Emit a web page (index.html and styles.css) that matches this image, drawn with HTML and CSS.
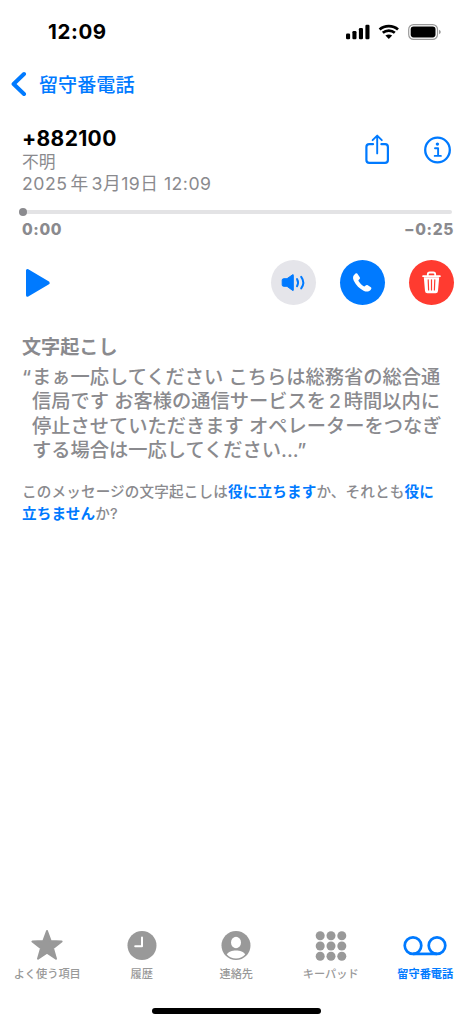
FILE: index.html
```html
<!DOCTYPE html>
<html lang="ja">
<head>
<meta charset="utf-8">
<title>留守番電話</title>
<link rel="stylesheet" href="styles.css">
</head>
<body>
<div class="screen">
  <header class="status">
    <span class="clock">12:09</span>
    <svg class="status-icons" width="98" height="20" viewBox="0 0 98 20">
      <rect x="0" y="12.5" width="4.1" height="5.8" rx="1.2"/><rect x="6.4" y="10" width="4.1" height="8.3" rx="1.2"/><rect x="12.9" y="7" width="4.1" height="11.3" rx="1.2"/><rect x="19.4" y="3.7" width="4.1" height="14.6" rx="1.2"/>
      <g fill="none" stroke="#000" stroke-width="2.7"><path d="M33.6 8.4C38.6 3.9 47 3.9 52 8.4"/><path d="M36.8 11.8C40.1 8.9 45.5 8.9 48.8 11.8"/></g>
      <path d="M39.4 14.5C41.5 13 44.1 13 46.2 14.5L42.8 18Z"/>
      <rect x="62.7" y="3.6" width="28.8" height="14.8" rx="4.8" fill="none" stroke="#999" stroke-width="1.2"/>
      <rect x="64.7" y="5.6" width="24.8" height="10.8" rx="2.8"/>
      <path d="M93 8.7Q94.8 9.5 94.8 11T93 13.3Z" fill="#999"/>
    </svg>
  </header>
  <nav class="nav">
    <svg width="16" height="26" viewBox="0 0 16 26"><path d="M13 3L2.6 13L13 23" fill="none" stroke="#007aff" stroke-width="4" stroke-linecap="round" stroke-linejoin="round"/></svg>
    <span class="nav-title">留守番電話</span>
  </nav>
  <section class="caller">
    <div class="caller-text">
      <div class="number">+882100</div>
      <div class="unknown">不明</div>
      <div class="date">2025<span class="year">年</span>3月19日 12:09</div>
    </div>
    <svg class="share" width="26" height="32" viewBox="0 0 26 32" fill="none" stroke="#007aff" stroke-width="2.2" stroke-linecap="round" stroke-linejoin="round"><path d="M9 10.2H5.2Q2.4 10.2 2.4 13V26Q2.4 28.9 5.3 28.9H21Q23.9 28.9 23.9 26V13Q23.9 10.2 21.1 10.2H17.4"/><path d="M13.2 19.4V1.6M8.6 6.2L13.2 1.6L17.8 6.2" stroke-width="1.9"/></svg>
    <svg class="info" width="28" height="28" viewBox="0 0 28 28" fill="none" stroke="#007aff"><circle cx="13.5" cy="14" r="12.3" stroke-width="2.3"/><circle cx="13.4" cy="8.1" r="1.7" fill="#007aff" stroke="none"/><path d="M11 12.3H14.1V19.9M10.7 19.9H16.9" stroke-width="1.9" stroke-linecap="round" stroke-linejoin="round"/></svg>
  </section>
  <section class="progress">
    <div class="track"><div class="knob"></div></div>
    <div class="times"><span>0:00</span><span>−0:25</span></div>
  </section>
  <section class="controls">
    <svg class="play" width="28" height="32" viewBox="0 0 28 32"><path d="M3.5 3.5V28.3L24.2 15.9Z" fill="#007aff" stroke="#007aff" stroke-width="3" stroke-linejoin="round"/></svg>
    <div class="round speaker"><svg width="45" height="45" viewBox="0 0 45 45"><path d="M12.5 18.7H16L21.6 14.8Q22.3 14.3 22.3 15.2V30Q22.3 30.9 21.6 30.4L16 26.3H12.5Q11.2 26.3 11.2 24.8V20.2Q11.2 18.7 12.5 18.7Z" fill="#007aff" stroke="#007aff"/><path d="M26 19.1Q28 22.6 26 26.2M30.2 16.8Q34.4 22.5 30.2 28.4" fill="none" stroke="#007aff" stroke-width="2" stroke-linecap="round"/></svg></div>
    <div class="round call"><svg width="45" height="45" viewBox="0 0 45 45"><path d="M15.3 13.8C16.3 13 17.2 13.3 17.9 14.4L19.6 16.9C20.3 18 20 18.7 19.1 19.5C18.2 20.3 18.3 20.7 18.9 21.6C20.1 23.4 21.4 24.8 23.2 26C24.1 26.7 24.6 26.7 25.3 25.8C26.1 24.9 26.8 24.7 27.8 25.3L30.5 27.1C31.5 27.8 31.7 28.5 30.9 29.5C29.3 31.6 26.9 32.2 24 30.9C19.7 29 15.8 25 13.7 20.5C12.5 17.8 12.8 15.7 15.3 13.8Z" fill="#fff"/></svg></div>
    <div class="round delete"><svg width="45" height="45" viewBox="0 0 45 45"><path d="M14.8 17.3H30.2L29 31Q28.8 33.3 26.6 33.3H18.4Q16.2 33.3 16 31Z" fill="#fff"/><path d="M14.1 16.2H30.9M18.8 16V14.4Q18.8 12.5 20.7 12.5H24.3Q26.2 12.5 26.2 14.4V16" fill="none" stroke="#fff" stroke-width="1.8" stroke-linecap="round"/><path d="M19.2 19.8L19.6 30M22.5 19.8V30M25.8 19.8L25.4 30" stroke="#ff3b30" stroke-width="1.2" stroke-linecap="round"/></svg></div>
  </section>
  <main class="transcript">
    <h1 class="heading">文字起こし</h1>
    <div class="quote">
      <div class="line first"><span class="open">“</span>まぁ一応してください こちらは総務省の総合通</div>
      <div class="line">信局です お客様の通信サービスを<span class="two">2</span>時間以内に</div>
      <div class="line">停止させていただきます オペレーターをつなぎ</div>
      <div class="line">する場合は一応してください<span class="end">...”</span></div>
    </div>
    <p class="feedback">このメッセージの文字起こしは<b>役に立ちます</b>か、それとも<b>役に<br>立ちません</b>か?</p>
  </main>
  <footer class="tabs">
    <div class="tab"><svg width="44" height="34" viewBox="0 0 44 34"><path d="M22 3L25.7 13.1L36.6 13.5L28 20.2L31 30.7L22 24.6L13 30.7L16 20.2L7.4 13.5L18.3 13.1Z" fill="#999" stroke="#999" stroke-width="2" stroke-linejoin="round"/></svg><span>よく使う項目</span></div>
    <div class="tab"><svg width="44" height="34" viewBox="0 0 44 34"><circle cx="22" cy="17.6" r="14.5" fill="#999"/><path d="M22 9.5V18.2H15.2" fill="none" stroke="#fff" stroke-width="2" stroke-linecap="round" stroke-linejoin="round"/></svg><span>履歴</span></div>
    <div class="tab"><svg width="44" height="34" viewBox="0 0 44 34"><circle cx="22" cy="17.6" r="14.5" fill="#999"/><ellipse cx="22" cy="14.5" rx="5" ry="5.7" fill="#fff"/><path d="M12.8 26.4C15.5 21.3 28.5 21.3 31.2 26.4C28.8 29.1 25.5 30.4 22 30.4S15.2 29.1 12.8 26.4Z" fill="#fff"/></svg><span>連絡先</span></div>
    <div class="tab"><svg width="44" height="34" viewBox="0 0 44 34" fill="#999"><circle cx="11.2" cy="7.8" r="4.5"/><circle cx="22" cy="7.8" r="4.5"/><circle cx="32.8" cy="7.8" r="4.5"/><circle cx="11.2" cy="18" r="4.5"/><circle cx="22" cy="18" r="4.5"/><circle cx="32.8" cy="18" r="4.5"/><circle cx="11.2" cy="28.2" r="4.5"/><circle cx="22" cy="28.2" r="4.5"/><circle cx="32.8" cy="28.2" r="4.5"/></svg><span>キーパッド</span></div>
    <div class="tab active"><svg width="44" height="34" viewBox="0 0 44 34" fill="none" stroke="#007aff" stroke-width="2.7"><circle cx="10" cy="17.6" r="8.3"/><circle cx="34" cy="17.6" r="8.3"/><path d="M10 25.9H34"/></svg><span>留守番電話</span></div>
  </footer>
  <div class="home"></div>
</div>
</body>
</html>
```
FILE: styles.css
```css
* { box-sizing: border-box; }
body { margin: 0; background: #fff; font-family: Inter, "Noto Sans CJK JP", sans-serif; color: #8a8a8e; }
svg { display: block; flex: none; }
.screen { width: 473px; height: 1024px; display: flex; flex-direction: column; white-space: nowrap; overflow: hidden; }
.status { height: 62px; padding: 0 0 0 48px; display: flex; align-items: center; color: #000; }
.clock { width: 298px; padding-top: 2px; font-size: 20.5px; font-weight: 700; letter-spacing: 0.6px; line-height: 24px; }
.nav { height: 44px; padding-left: 11px; display: flex; align-items: center; gap: 12px; color: #007aff; }
.nav-title { padding-top: 1px; font-size: 19.1px; font-weight: 500; line-height: 28px; }
.caller { height: 89px; padding: 20px 0 0 22px; display: flex; align-items: flex-start; }
.caller-text { width: 342px; }
.number { font-size: 21px; line-height: 25px; font-weight: 700; color: #000; letter-spacing: 0.35px; }
.unknown { font-size: 16.8px; line-height: 22px; }
.date { font-size: 17.7px; line-height: 22px; letter-spacing: 0.48px; }
.year { margin: 0 3px; }
.share { margin-top: 8px; }
.info { margin: 10px 0 0 34px; }
.progress { height: 65px; padding: 15px 21px 0 22px; }
.track { height: 4px; border-radius: 2px; background: #e3e3e5; display: flex; align-items: center; }
.knob { flex: none; width: 8px; height: 8px; margin-left: -3px; border-radius: 50%; background: #8a8a8e; }
.times { display: flex; justify-content: space-between; margin: 4px -2px 0 0; font-size: 15.5px; line-height: 23px; font-weight: 800; letter-spacing: 0.65px; }
.controls { height: 45px; padding-left: 23.5px; display: flex; align-items: center; }
.play { margin-right: 219px; }
.round { width: 45px; height: 45px; border-radius: 50%; margin-right: 24px; flex: none; }
.speaker { background: #e5e5ea; }
.call { background: #007aff; }
.delete { background: #ff3b30; }
.transcript { height: 617px; padding: 29px 0 0 22px; }
.heading { margin: 0 0 5px; font-size: 19.1px; line-height: 26px; font-weight: 600; }
.quote { padding-left: 10px; font-size: 19.25px; line-height: 24.3px; font-weight: 500; }
.open { display: inline-block; width: 10px; margin-left: -10px; }
.two { margin: 0 3px; }
.feedback { margin: 19px 0 0; font-size: 14.6px; letter-spacing: 0.14px; line-height: 22px; font-weight: 500; }
.feedback b { color: #007aff; font-weight: 600; }
.tabs { height: 80px; display: flex; padding: 6px 0 0; }
.tab { width: 94.5px; display: flex; flex-direction: column; align-items: center; font-size: 11.2px; line-height: 18px; font-weight: 500; color: #999; gap: 3px; }
.active { color: #007aff; font-weight: 600; }
.home { width: 169px; height: 6px; border-radius: 3px; background: #000; margin: 6px 0 0 152px; }
```
